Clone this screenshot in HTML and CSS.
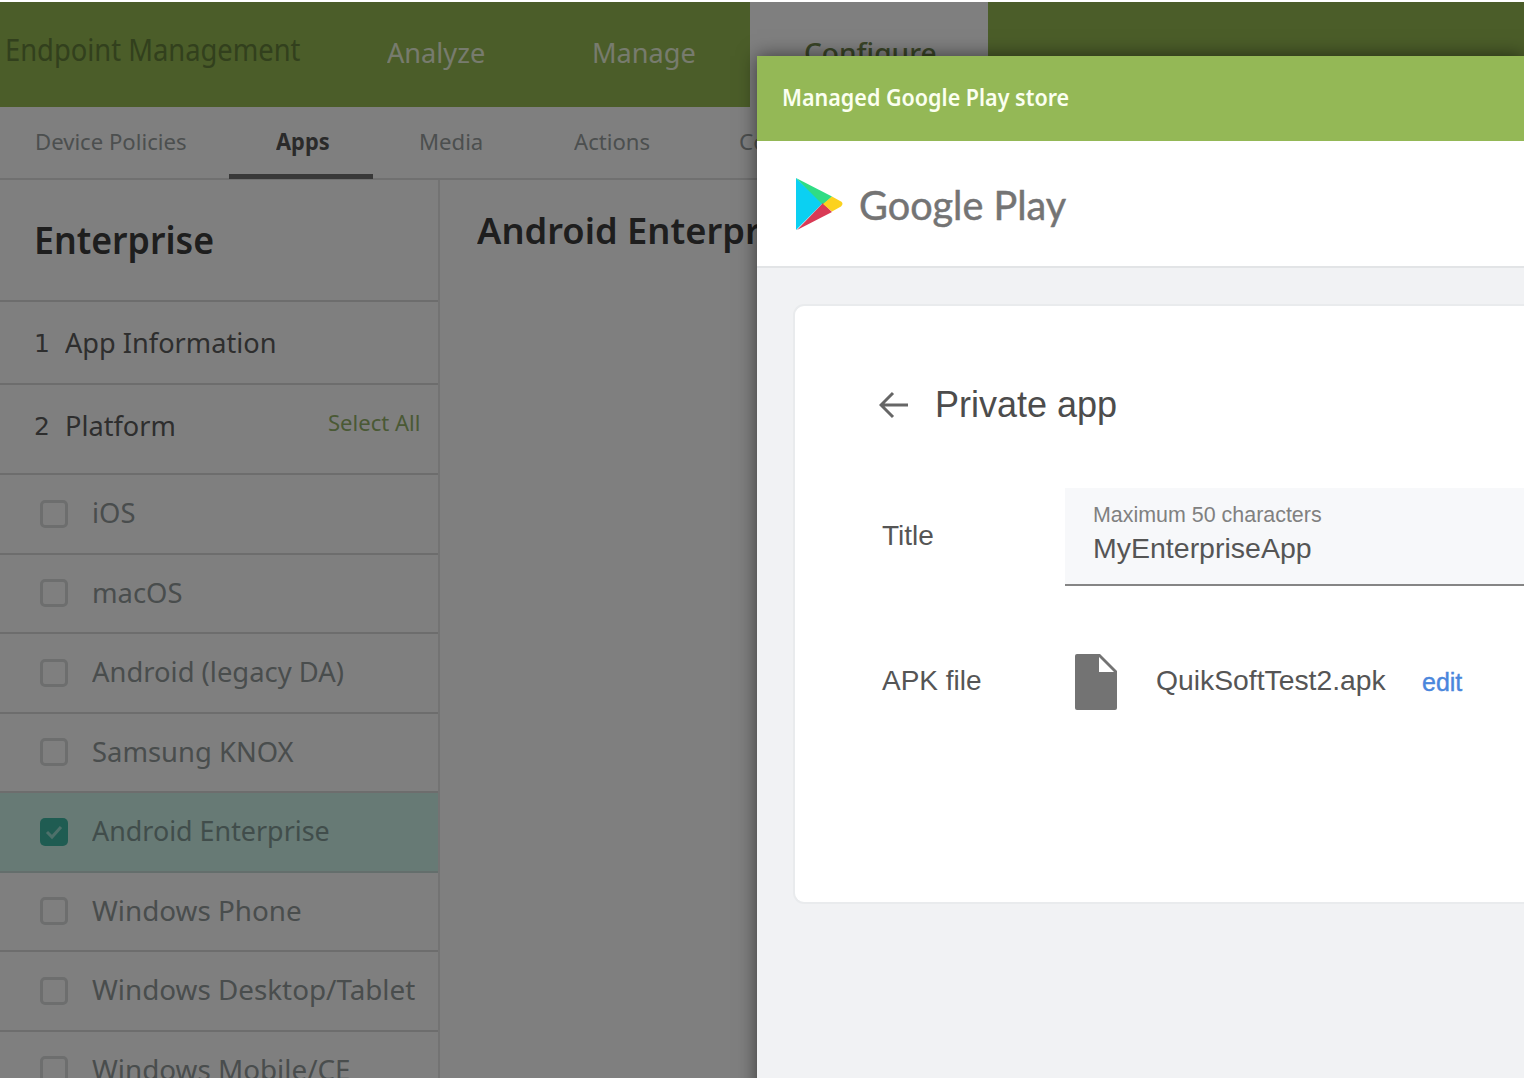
FILE: index.html
```html
<!DOCTYPE html>
<html lang="en">
<head>
<meta charset="utf-8">
<title>Endpoint Management</title>
<link rel="stylesheet" href="styles.css">
</head>
<body>
<div class="console">
  <header class="topbar">
    <div class="brand"><span class="fit">Endpoint Management</span></div>
    <nav class="primary">
      <a class="tab tab-analyze"><span class="fit">Analyze</span></a>
      <a class="tab tab-manage"><span class="fit">Manage</span></a>
      <a class="tab tab-configure"><span class="fit">Configure</span></a>
    </nav>
  </header>
  <nav class="secondary">
    <a class="sub sub-policies"><span class="fit">Device Policies</span></a>
    <a class="sub sub-apps"><span class="fit">Apps</span></a>
    <a class="sub sub-media"><span class="fit">Media</span></a>
    <a class="sub sub-actions"><span class="fit">Actions</span></a>
    <a class="sub">Co</a>
  </nav>
  <div class="workspace">
    <aside class="sidebar">
      <h2 class="side-title"><span class="fit">Enterprise</span></h2>
      <div class="step"><span class="num">1</span><span class="fit">App Information</span></div>
      <div class="step step-platform"><span class="num">2</span><span class="fit">Platform</span><a class="select-all"><span class="fit">Select All</span></a></div>
      <ul class="platforms">
        <li><i class="box"></i><span class="fit">iOS</span></li>
        <li><i class="box"></i><span class="fit">macOS</span></li>
        <li><i class="box"></i><span class="fit">Android (legacy DA)</span></li>
        <li><i class="box"></i><span class="fit">Samsung KNOX</span></li>
        <li class="selected"><i class="box"><svg viewBox="0 0 28 28"><path d="M7 14l5 5 9-10"/></svg></i><span class="fit">Android Enterprise</span></li>
        <li class="windows"><i class="box"></i><span class="fit">Windows Phone</span></li>
        <li class="windows"><i class="box"></i><span class="fit">Windows Desktop/Tablet</span></li>
        <li class="windows"><i class="box"></i><span class="fit">Windows Mobile/CE</span></li>
      </ul>
    </aside>
    <main class="content"><h1><span class="fit">Android Enterprise</span></h1></main>
  </div>
</div>
<div class="backdrop">
  <section class="dialog">
    <header class="dialog-head"><span class="fit">Managed Google Play store</span></header>
    <div class="play-bar">
      <svg class="play-logo" viewBox="0 0 48 54"><path fill="#0bd0f2" d="M1 1v52l27-27z"/><path fill="#2fdc85" d="M1 1l36 18.500-9 8.500z"/><path fill="#d93a55" d="M2 53l35-18-9-9z"/><path fill="#fbd21e" d="M37 19.500l9 5q3 2 0 5l-9 5-9-7.500z"/></svg>
      <span class="play-name"><span class="fit">Google Play</span></span>
    </div>
    <div class="dialog-body">
      <div class="card">
        <div class="card-head">
          <svg class="back" viewBox="0 0 30 28"><path d="M29 14H2M14 2L2 14l12 12"/></svg>
          <span>Private app</span>
        </div>
        <div class="row row-title">
          <label><span>Title</span></label>
          <div class="field">
            <div class="hint"><span class="fit">Maximum 50 characters</span></div>
            <div class="value"><span class="fit">MyEnterpriseApp</span></div>
          </div>
        </div>
        <div class="row row-file">
          <label><span>APK file</span></label>
          <svg class="file" viewBox="0 0 44 58"><path fill="#737373" d="M3 1h23l17 17v37q0 2-2 2H3q-2 0-2-2V3q0-2 2-2z"/><path fill="#fff" d="M25 4v15h15z"/></svg>
          <span class="file-name"><span class="fit">QuikSoftTest2.apk</span></span>
          <a class="edit"><span class="fit">edit</span></a>
        </div>
      </div>
    </div>
  </section>
</div>
</body>
</html>
```
FILE: styles.css
```css
* { box-sizing: border-box; }
body { margin: 0; width: 1524px; height: 1078px; overflow: hidden; background: #fff; font-family: "Noto Sans", sans-serif; white-space: nowrap; }
h1, h2, ul { margin: 0; padding: 0; font-size: inherit; font-weight: inherit; list-style: none; }
.fit { display: inline-block; transform: scaleX(var(--s, 1)); transform-origin: 0 50%; }

.console { height: 1078px; padding-top: 2px; display: flex; flex-direction: column; overflow: hidden; }
.topbar { height: 105px; flex: none; display: flex; background: #96ba52; }
.brand { --s: .911; width: 358px; padding-left: 5px; font-size: 30px; line-height: 96px; color: #64803a; }
.primary { display: flex; font-size: 27px; line-height: 102px; color: #eef6dc; }
.tab { --s: 1.005; }
.tab-analyze { width: 205px; padding-left: 29px; }
.tab-manage { width: 187px; padding-left: 29px; }
.tab-configure { --s: 1.04; width: 238px; padding-left: 54px; background: #fff; color: #72884e; font-weight: 500; }

.secondary { --s: .983; height: 73px; flex: none; display: flex; font-size: 22.500px; line-height: 70px; color: #989e9e; border-bottom: 2px solid #e0e0e0; }
.sub-policies { width: 229px; padding-left: 35px; }
.sub-apps { --s: .97; width: 144px; height: 72px; padding-left: 47px; border-bottom: 5px solid #707070; color: #555; font-weight: 700; }
.sub-media { width: 200px; padding-left: 46px; }
.sub-actions { width: 166px; padding-left: 1px; }

.workspace { flex: 1; display: flex; min-height: 0; }
.sidebar { width: 440px; flex: none; border-right: 2px solid #e6e6e6; color: #5c5c5c; font-size: 28px; }
.side-title { --s: .965; height: 122px; padding-left: 34px; font-size: 37px; font-weight: 600; line-height: 120px; border-bottom: 2px solid #dadada; color: #3c3c3c; }
.step { --s: .97; height: 83px; display: flex; padding-left: 34px; line-height: 80px; border-bottom: 2px solid #dadada; }
.step-platform { height: 90px; }
.num { width: 31px; font-family: "DejaVu Sans", sans-serif; font-size: 25px; line-height: 83px; }
.select-all { --s: .98; margin-left: auto; width: 110px; font-size: 22.500px; line-height: 76px; color: #94b36a; }
.platforms li { --s: .978; height: 79.500px; padding-left: 40px; display: flex; align-items: center; gap: 24px; border-bottom: 2px solid #dadada; color: #939a9a; }
.platforms .fit { padding-bottom: 3px; }
.platforms .selected { --s: .96; background: #cef4ea; border-color: #c8dcd8; color: #829b97; }
.platforms .windows { --s: .993; }
.box { width: 28px; height: 28px; border: 3px solid #dadcdc; border-radius: 5px; }
.selected .box { border: 0; background: #3fb9a5; }
.box svg { display: block; fill: none; stroke: #9be0d4; stroke-width: 3; }
.content { --s: 1.008; flex: 1; padding-left: 37px; font-size: 36px; font-weight: 600; line-height: 102px; color: #3c3c3c; }

.backdrop { position: absolute; inset: 2px 0 0; background: rgba(0, 0, 0, .5); padding: 54px 0 0 757px; overflow: hidden; }
.dialog { height: 1100px; display: flex; flex-direction: column; background: #f1f2f4; box-shadow: 0 0 18px rgba(0, 0, 0, .55); }
.dialog-head { --s: .915; height: 85px; padding-left: 25px; background: #94b856; color: #fbfff0; font-size: 23.500px; font-weight: 600; line-height: 82px; }
.play-bar { height: 127px; padding-left: 38px; display: flex; align-items: center; background: #fff; border-bottom: 2px solid #e2e4e6; }
.play-logo { width: 48px; height: 54px; }
.play-name { --s: .99; padding: 2px 0 0 16px; font-family: Lato, sans-serif; font-size: 40px; line-height: 60px; color: #747474; -webkit-text-stroke: .5px #747474; }
.dialog-body { padding: 36px 0 0 36px; }
.card { height: 600px; background: #fff; border: 2px solid #e9ebed; border-right: 0; border-radius: 11px 0 0 11px; font-family: "Liberation Sans", Arial, sans-serif; font-size: 28px; color: #555; }
.card-head { display: flex; align-items: center; gap: 26px; padding: 78px 0 0 84px; height: 120px; font-size: 36px; line-height: 42px; color: #4c4c4c; }
.back { width: 30px; height: 28px; fill: none; stroke: #666; stroke-width: 3; }
.row { display: flex; align-items: center; padding-left: 87px; }
.row label { width: 183px; padding-bottom: 3px; }
.row-title { margin-top: 62px; }
.field { flex: 1; height: 98px; padding: 13px 0 0 28px; background: #f7f8fa; border-bottom: 2px solid #858585; }
.hint { --s: .974; font-size: 22px; line-height: 28px; color: #808080; }
.value { --s: 1.018; line-height: 40px; color: #555; }
.row-file { margin-top: 66px; height: 60px; }
.file { width: 44px; height: 58px; margin-left: 9px; }
.file-name { --s: 1.011; width: 266px; margin-left: 38px; padding-bottom: 2px; }
.edit { font-size: 25px; color: #4a86dc; -webkit-text-stroke: .4px #4a86dc; }
```
